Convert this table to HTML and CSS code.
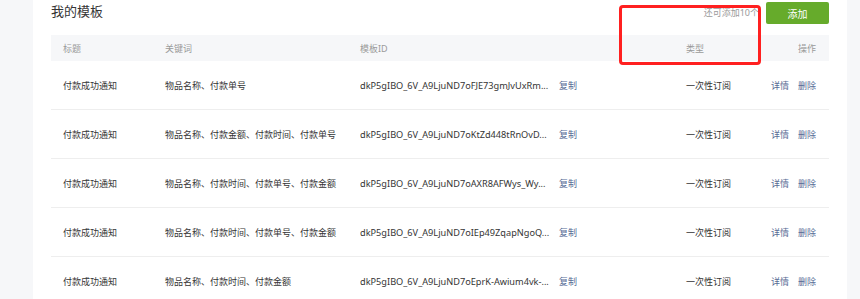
FILE: index.html
```html
<!DOCTYPE html>
<html>

<head>
    <title>我的模板</title>
    <meta charset="utf-8">
    <meta name="viewport" content="width=device-width, initial-scale=1.0">
    <link rel="stylesheet" href="styles.css">
</head>

<body>

    <div class="panel">
        <div class="mark"></div>

        <div class="top">
            <h2>我的模板</h2>
            <span class="left">还可添加10个</span>
            <button class="add">添加</button>
        </div>

        <div class="liste">
            <div class="rad hoved">
                <span>标题</span>
                <span>关键词</span>
                <span>模板ID</span>
                <span>类型</span>
                <span class="ops">操作</span>
            </div>

            <div class="rad">
                <span>付款成功通知</span>
                <span>物品名称、付款单号</span>
                <span class="id"><span class="tid">dkP5gIBO_6V_A9LjuND7oFJE73gmJvUxRm...</span><a>复制</a></span>
                <span>一次性订阅</span>
                <span class="ops"><a>详情</a><a>删除</a></span>
            </div>

            <div class="rad">
                <span>付款成功通知</span>
                <span>物品名称、付款金额、付款时间、付款单号</span>
                <span class="id"><span class="tid">dkP5gIBO_6V_A9LjuND7oKtZd448tRnOvD...</span><a>复制</a></span>
                <span>一次性订阅</span>
                <span class="ops"><a>详情</a><a>删除</a></span>
            </div>

            <div class="rad">
                <span>付款成功通知</span>
                <span>物品名称、付款时间、付款单号、付款金额</span>
                <span class="id"><span class="tid">dkP5gIBO_6V_A9LjuND7oAXR8AFWys_Wy...</span><a>复制</a></span>
                <span>一次性订阅</span>
                <span class="ops"><a>详情</a><a>删除</a></span>
            </div>

            <div class="rad">
                <span>付款成功通知</span>
                <span>物品名称、付款时间、付款单号、付款金额</span>
                <span class="id"><span class="tid">dkP5gIBO_6V_A9LjuND7oIEp49ZqapNgoQ...</span><a>复制</a></span>
                <span>一次性订阅</span>
                <span class="ops"><a>详情</a><a>删除</a></span>
            </div>

            <div class="rad">
                <span>付款成功通知</span>
                <span>物品名称、付款时间、付款金额</span>
                <span class="id"><span class="tid">dkP5gIBO_6V_A9LjuND7oEprK-Awium4vk-...</span><a>复制</a></span>
                <span>一次性订阅</span>
                <span class="ops"><a>详情</a><a>删除</a></span>
            </div>
        </div>
    </div>

</body>

</html>
```

FILE: styles.css
```css
body {
    margin: 0;
    background-color: #f6f7f9;
    font-family: "Noto Sans", "Noto Sans CJK SC", sans-serif;
    font-size: 9px;
    color: #353535;
}

.panel {
    position: relative;
    margin-left: 33px;
    width: 778px;
    min-height: 299px;
    padding: 0 18px;
    background-color: #ffffff;
}

/* red highlight frame drawn over the header */
.mark {
    position: absolute;
    left: 586px;
    top: 5px;
    width: 136px;
    height: 54px;
    border: 3px solid #ff2020;
    border-radius: 4px;
}

.top {
    display: flex;
    align-items: center;
    height: 22px;
    padding-top: 2px;
    margin-bottom: 11px;
}

h2 {
    margin: 0 0 5px 0;
    font-size: 13px;
    font-weight: normal;
    flex: 1;
}

.left {
    color: #9a9a9a;
    margin-right: 7px;
    margin-bottom: 2px;
}

.add {
    width: 63px;
    height: 22px;
    border: none;
    border-radius: 2px;
    background-color: #66ab2b;
    color: #ffffff;
    font-family: inherit;
    font-size: 10px;
}

.rad {
    display: grid;
    grid-template-columns: 102px 195px 326px 84px 1fr;
    align-items: center;
    height: 48px;
    padding: 0 13px 0 12px;
    border-bottom: 1px solid #eeeeee;
    white-space: nowrap;
}

.hoved {
    height: 26px;
    border-bottom: none;
    background-color: #f6f7f9;
    color: #9a9a9a;
}

.id {
    display: flex;
    align-items: center;
}

.tid {
    width: 193px;
    overflow: hidden;
    margin-right: 6px;
    font-size: 9.2px;
}

a {
    color: #576b95;
}

.ops {
    display: flex;
    justify-content: flex-end;
    gap: 9px;
}
```
